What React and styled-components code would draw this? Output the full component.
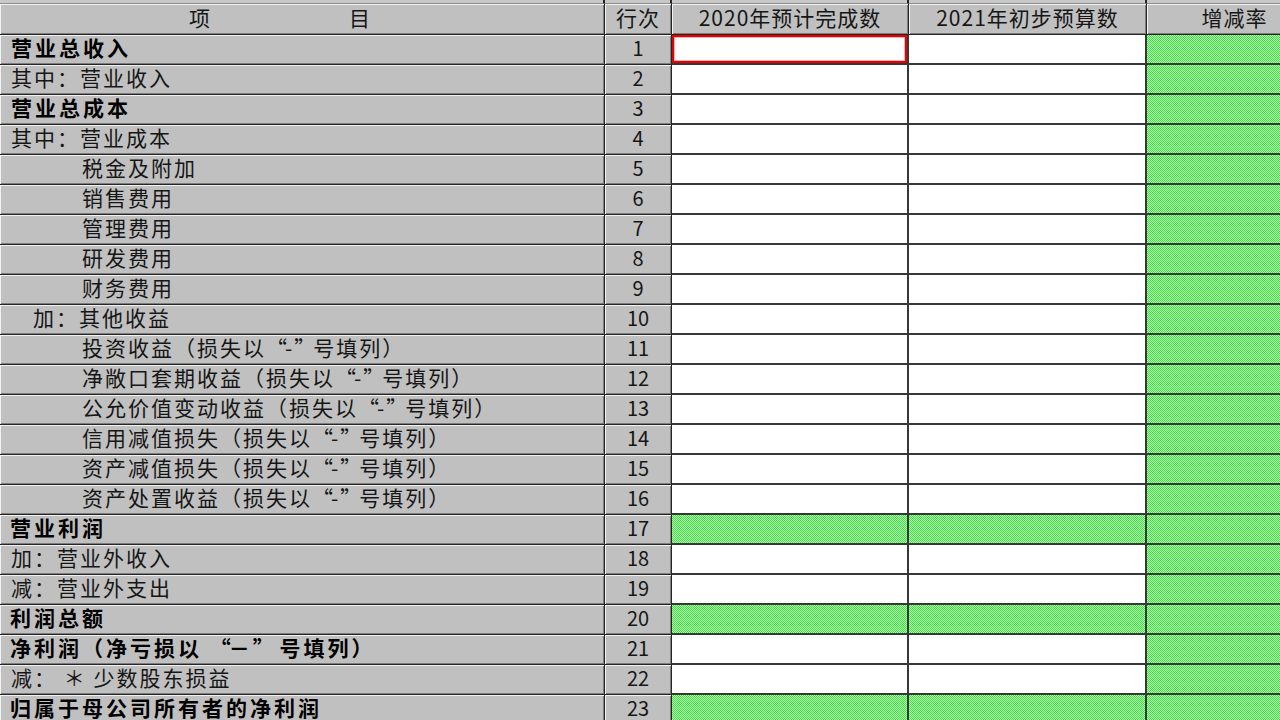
import React from 'react';
import styled, { createGlobalStyle, css } from 'styled-components';

const GlobalStyle = createGlobalStyle`
  html, body {
    margin: 0;
    padding: 0;
    overflow: hidden;
    background: #c0c0c0;
  }
  body {
    font-family: "Noto Sans CJK SC", "Noto Sans", sans-serif;
  }
`;

const GRAY = '#c0c0c0';
const LINE = '#262626';

const DITHER =
  "url(\"data:image/svg+xml,%3Csvg xmlns='http://www.w3.org/2000/svg' width='2' height='2' shape-rendering='crispEdges'%3E%3Crect width='2' height='2' fill='%23b4fab4'/%3E%3Crect width='1' height='1' fill='%2340e040'/%3E%3Crect x='1' y='1' width='1' height='1' fill='%2340e040'/%3E%3C/svg%3E\")";

const Sheet = styled.div`
  display: grid;
  grid-template-columns: 605px 67px 237px 238px 176px;
  grid-template-rows: 4px 31px;
  grid-auto-rows: 30px;
  width: 1323px;
`;

const greenFill = css`
  background-color: #78ec78;
  background-image: ${DITHER};
  background-size: 2px 2px;
  background-repeat: repeat;
  background-attachment: fixed;
  background-position: 0 0;
  image-rendering: pixelated;
`;

const StripCell = styled.div`
  box-sizing: border-box;
  background: #c8c8c8;
  border-right: 2px solid ${LINE};
  border-bottom: 1px solid #8e8e8e;
`;

const GrayCell = styled.div`
  box-sizing: border-box;
  display: flex;
  align-items: center;
  background: ${GRAY};
  border-right: 1px solid ${LINE};
  border-bottom: 1px solid ${LINE};
  box-shadow: inset 1px 1px 0 #f2f2f2, inset -1px -1px 0 #7c7c7c;
  font-size: 21px;
  line-height: 1;
  color: #161616;
  white-space: pre;
  padding-bottom: 4px;
`;

const HeaderCell = styled(GrayCell)`
  justify-content: center;
  letter-spacing: 1px;
  padding-bottom: 3px;
`;

const ItemHeader = styled(GrayCell)`
  padding-left: 189px;
  gap: 139px;
  padding-bottom: 3px;
`;

const LabelCell = styled(GrayCell)`
  padding-left: ${(p) => p.$indent}px;
  font-weight: ${(p) => (p.$bold ? 700 : 400)};
  letter-spacing: ${(p) => (p.$bold ? '3px' : '2px')};
  color: ${(p) => (p.$bold ? '#000' : '#161616')};
`;

const OpenQuote = styled.span`
  display: inline-block;
  width: 19px;
  text-align: right;
  letter-spacing: 0;
`;

const CloseQuote = styled.span`
  display: inline-block;
  width: 19px;
  text-align: left;
  letter-spacing: 0;
`;

const NumCell = styled(GrayCell)`
  justify-content: center;
  font-size: 20px;
`;

const InputCell = styled.div`
  box-sizing: border-box;
  background: #ffffff;
  border-right: 2px solid #383838;
  border-bottom: 2px solid #383838;
  ${(p) => p.$green && greenFill}
  ${(p) =>
    p.$selected &&
    css`
      box-shadow: inset 0 0 0 2px #e80000, inset 0 0 0 3px #ffb0b0;
    `}
`;

const rows = [
  { label: '营业总收入', bold: true, indent: 11 },
  { label: '其中：营业收入', indent: 11 },
  { label: '营业总成本', bold: true, indent: 11 },
  { label: '其中：营业成本', indent: 11 },
  { label: '税金及附加', indent: 82 },
  { label: '销售费用', indent: 82 },
  { label: '管理费用', indent: 82 },
  { label: '研发费用', indent: 82 },
  { label: '财务费用', indent: 82 },
  { label: '加：其他收益', indent: 33 },
  { label: '投资收益（损失以“-”号填列）', indent: 82 },
  { label: '净敞口套期收益（损失以“-”号填列）', indent: 82 },
  { label: '公允价值变动收益（损失以“-”号填列）', indent: 82 },
  { label: '信用减值损失（损失以“-”号填列）', indent: 82 },
  { label: '资产减值损失（损失以“-”号填列）', indent: 82 },
  { label: '资产处置收益（损失以“-”号填列）', indent: 82 },
  { label: '营业利润', bold: true, indent: 10, green: true },
  { label: '加：营业外收入', indent: 11 },
  { label: '减：营业外支出', indent: 11 },
  { label: '利润总额', bold: true, indent: 10, green: true },
  { label: '净利润（净亏损以 “－” 号填列）', bold: true, indent: 10 },
  { label: '减： ＊ 少数股东损益', indent: 11 },
  { label: '归属于母公司所有者的净利润', bold: true, indent: 10, green: true },
];

function renderLabel(text) {
  const parts = text.split(/([“”])/);
  return parts.map((part, i) => {
    if (part === '“') return <OpenQuote key={i}>“</OpenQuote>;
    if (part === '”') return <CloseQuote key={i}>”</CloseQuote>;
    return <React.Fragment key={i}>{part}</React.Fragment>;
  });
}

export default function App() {
  return (
    <>
      <GlobalStyle />
      <Sheet>
        <StripCell />
        <StripCell />
        <StripCell />
        <StripCell />
        <StripCell />

        <ItemHeader>
          <span>项</span>
          <span>目</span>
        </ItemHeader>
        <HeaderCell>行次</HeaderCell>
        <HeaderCell>2020年预计完成数</HeaderCell>
        <HeaderCell>2021年初步预算数</HeaderCell>
        <HeaderCell>增减率</HeaderCell>

        {rows.map((r, i) => (
          <React.Fragment key={i}>
            <LabelCell $bold={r.bold} $indent={r.indent}>
              {renderLabel(r.label)}
            </LabelCell>
            <NumCell>{i + 1}</NumCell>
            <InputCell $green={r.green} $selected={i === 0} />
            <InputCell $green={r.green} />
            <InputCell $green />
          </React.Fragment>
        ))}
      </Sheet>
    </>
  );
}
